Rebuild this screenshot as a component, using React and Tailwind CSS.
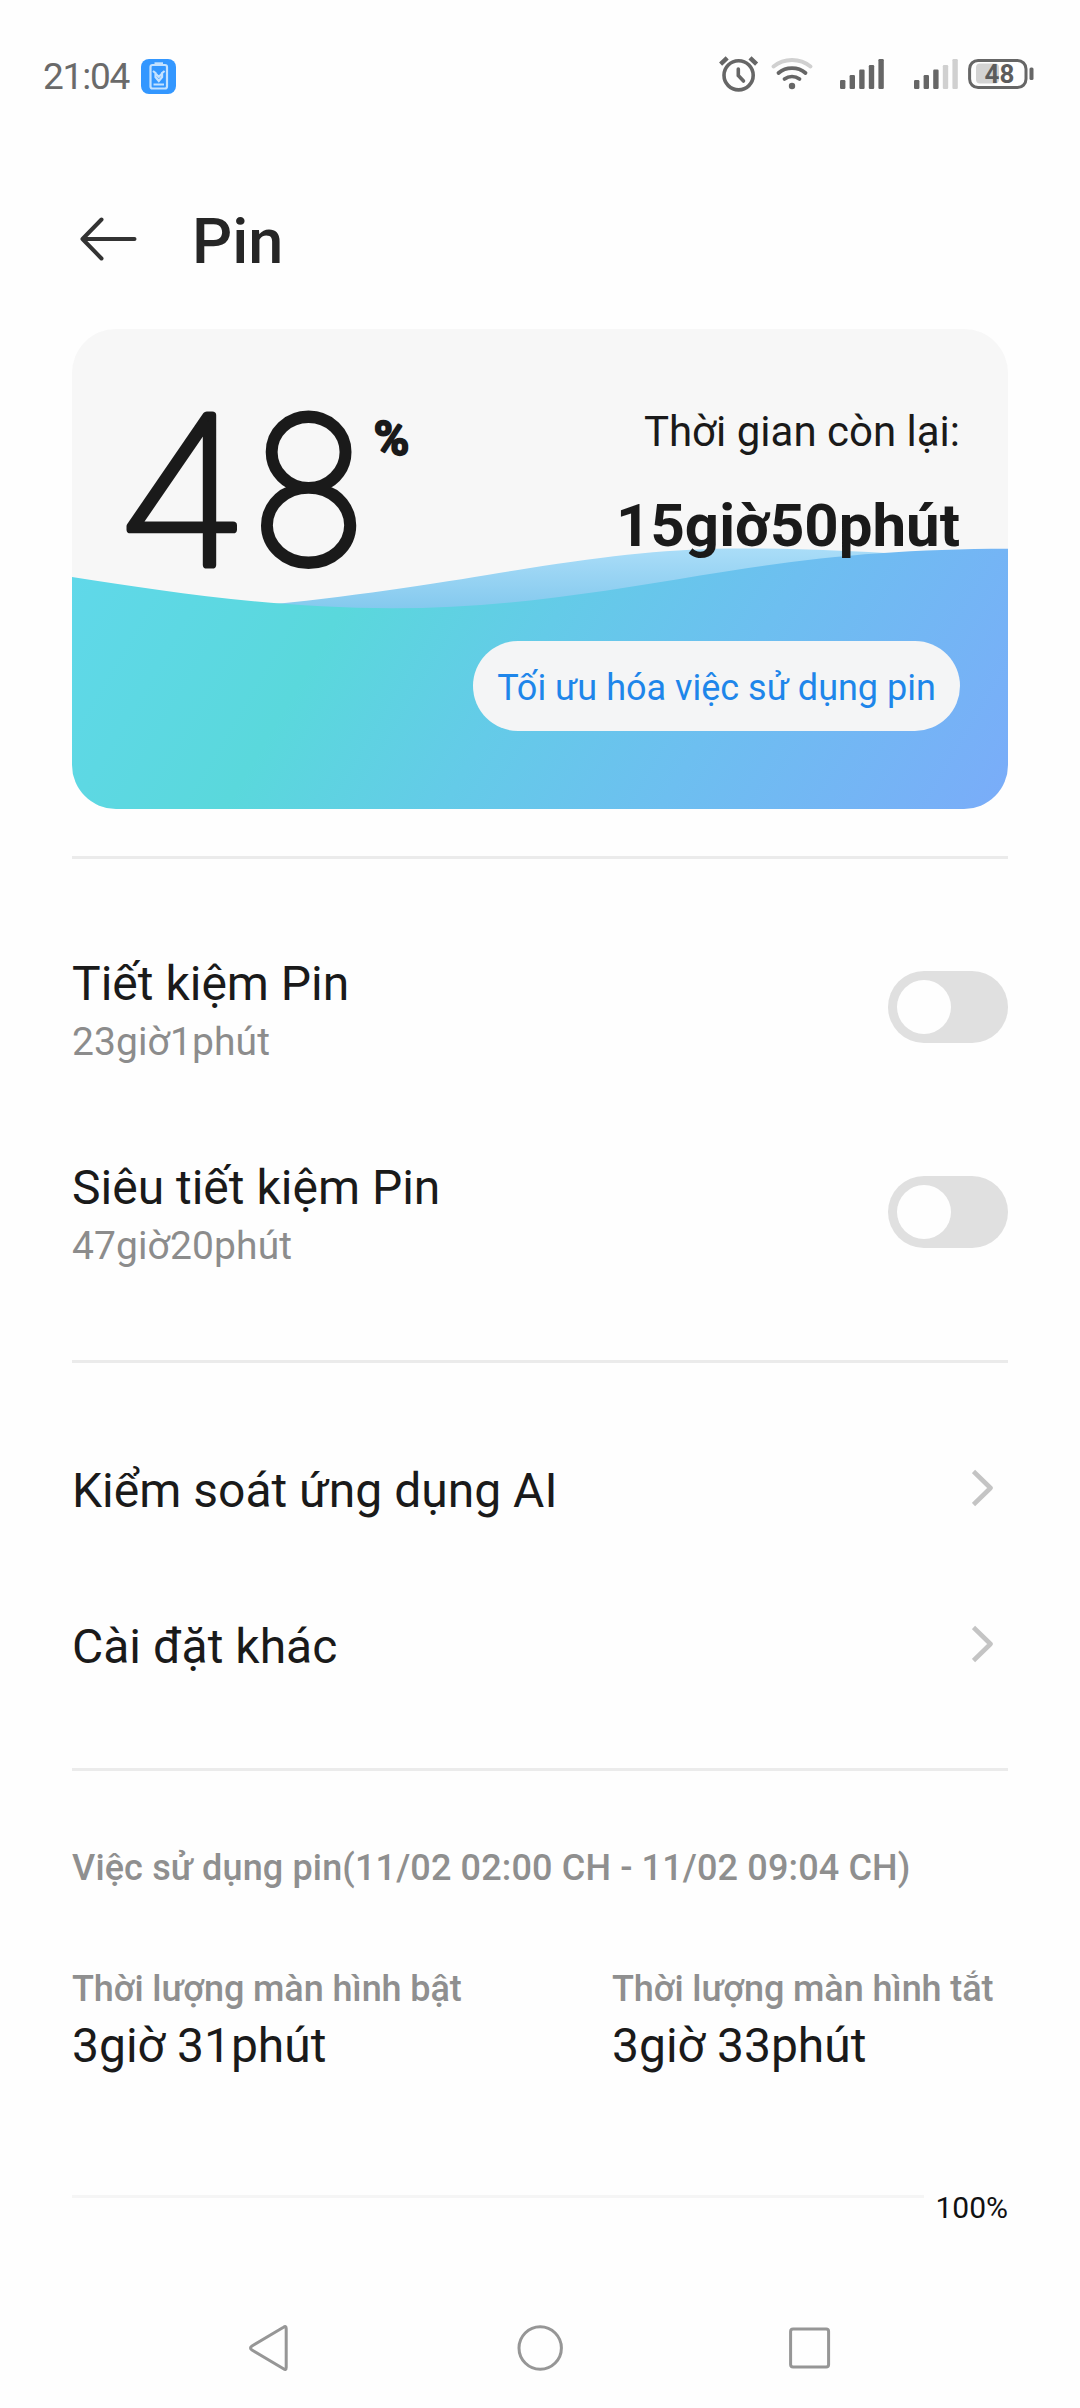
function AlarmIcon() {
  return (
    <svg width="40" height="38" viewBox="0 0 40 38" fill="none" stroke="#666" strokeWidth="3.6" strokeLinecap="round">
      <circle cx="19.6" cy="20.3" r="14.6" />
      <path d="M19.3 14v6.5l5.2 5.5" />
      <path d="M1.6 9.2 8.2 2.8M37.6 9.2 31 2.8" strokeWidth="4.4" strokeLinecap="butt" />
    </svg>
  );
}

function WifiIcon() {
  return (
    <svg width="42" height="34" viewBox="0 0 42 34" fill="none" strokeWidth="3.8" strokeLinecap="round">
      <path d="M2.5 9.5C13 .8 29 .8 39.5 9.5" stroke="#d0d0d0" />
      <path d="M7.5 16C15 9.5 27 9.5 34.5 16" stroke="#666" />
      <path d="M13.5 22C18 18.7 24 18.7 28.5 22" stroke="#666" />
      <circle cx="21" cy="29" r="3.2" fill="#666" />
    </svg>
  );
}

function SignalIcon({ level }) {
  const bars = [9, 14, 19.5, 24, 30];
  return (
    <svg width="44" height="30" viewBox="0 0 44 30">
      {bars.map((h, i) => (
        <rect key={h} x={i * 9.6} y={30 - h} width="5.4" height={h} rx="1.2" fill={i < level ? "#666" : "#d0d0d0"} />
      ))}
    </svg>
  );
}

function BatteryIcon() {
  return (
    <svg width="66" height="32" viewBox="0 0 66 32">
      <rect x="8" y="5.5" width="23" height="20" rx="4" fill="#d3d3d3" />
      <rect x="1.6" y="2.4" width="56.4" height="27.2" rx="8.5" fill="none" stroke="#666" strokeWidth="3" />
      <rect x="61.5" y="9.5" width="4" height="12.5" rx="1.5" fill="#666" />
      <text x="31.5" y="25.3" textAnchor="middle" fontSize="26" fontWeight="700" fill="#5c5c5c" className="font-[Roboto]">48</text>
    </svg>
  );
}

function SaverBadge() {
  return (
    <span className="flex size-[35px] items-center justify-center rounded-lg bg-[#3397ff]">
      <svg width="20" height="28" viewBox="0 0 20 28" fill="none" stroke="#c4e2ff" strokeWidth="2.2">
        <rect x="1.5" y="3" width="16.5" height="23.5" rx="2" />
        <path d="M5.5 1.8h8.5" strokeWidth="3" />
        <path d="M4 9l2.5 2v4l3.3 4 3.3-4v-4L15.6 9M7 12l2.8 3 2.8-3M4.500 22.500h10.500" />
      </svg>
    </span>
  );
}

function StatusBar() {
  return (
    <div className="flex h-[152px] shrink-0 items-center justify-between pr-[46px] pl-[43px]">
      <div className="flex items-center">
        <span className="mt-0.5 w-[98px] text-[37px] leading-[44px] tracking-[-1.2px] text-[#6a6a6a]">21:04</span>
        <SaverBadge />
      </div>
      <div className="-mt-1 flex items-center">
        <AlarmIcon />
        <span className="ml-3"><WifiIcon /></span>
        <span className="ml-[27px]"><SignalIcon level={5} /></span>
        <span className="ml-[30px]"><SignalIcon level={3} /></span>
        <span className="ml-[10px]"><BatteryIcon /></span>
      </div>
    </div>
  );
}

function Header() {
  return (
    <header className="flex h-[177px] shrink-0 items-center pl-[79px]">
      <svg width="60" height="46" viewBox="0 0 60 46" className="-mt-1" fill="none" stroke="#333" strokeWidth="4" strokeLinecap="round" strokeLinejoin="round">
        <path d="M22.5 3.5 3.5 23l19 19.5M3.5 23H55.5" />
      </svg>
      <h1 className="mt-0.5 ml-[53px] text-[63px] leading-[74px] font-medium text-[#262626]">Pin</h1>
    </header>
  );
}

function Waves() {
  return (
    <svg className="absolute inset-0 rounded-[44px]" width="936" height="480" viewBox="0 0 936 480">
      <defs>
        <linearGradient id="front" gradientUnits="userSpaceOnUse" x1="0" y1="220" x2="807" y2="698">
          <stop offset="0" stopColor="#60d8ea" />
          <stop offset=".28" stopColor="#5ad8dc" />
          <stop offset=".48" stopColor="#64cbe8" />
          <stop offset=".68" stopColor="#6dbff0" />
          <stop offset="1" stopColor="#7aacf9" />
        </linearGradient>
        <linearGradient id="back" x1="0" y1="0" x2="0" y2="1">
          <stop offset="0" stopColor="#aaddf8" />
          <stop offset="1" stopColor="#84c9ee" />
        </linearGradient>
      </defs>
      <path fill="url(#back)" d="M180 277 201 275.3C300 265.5 400 248.5 455 239.5C540 226 600 219.5 670 219.5C730 219.5 780 222 830 225V280H180Z" />
      <path fill="url(#front)" d="M0 248C90 262 200 279.3 320 279.3C430 279.3 530 263 628 246.5C730 229.5 820 219.7 936 219.7V480H0Z" />
    </svg>
  );
}

function Percentage() {
  return (
    <svg width="300" height="180" viewBox="0 0 300 180" className="mt-[72px] ml-[42px] overflow-visible font-[Inter]" aria-label="48%" fill="#1a1a1a" stroke="#1a1a1a" strokeLinejoin="round">
      <g fontSize="200" fontWeight="100">
        <text transform="translate(-0.5 163.5) scale(1.146 1.032)" strokeWidth="7">4</text>
        <text transform="translate(136.8 161.5) scale(.97 1.006)" strokeWidth="7.8">8</text>
      </g>
      <text x="259.8" y="54" fontSize="48" fontWeight="500" strokeWidth="2.4" className="font-[Roboto]">%</text>
    </svg>
  );
}

function BatteryCard() {
  return (
    <section className="relative mx-[72px] flex h-[480px] shrink-0 justify-between rounded-[44px] bg-[#f7f7f7]">
      <Waves />
      <div className="relative"><Percentage /></div>
      <div className="relative flex flex-col items-end pt-[73px] pr-12 text-[#1a1a1a]">
        <p className="text-[42px] leading-[60px]">Thời gian còn lại:</p>
        <p className="mt-[22px] text-[60px] leading-[84px] font-bold">15giờ50phút</p>
        <button className="mt-[73px] h-[90px] w-[487px] rounded-full bg-[#f4f5f6] pt-[3px] text-[36px] whitespace-nowrap text-[#1e86ea]">Tối ưu hóa việc sử dụng pin</button>
      </div>
    </section>
  );
}

function Divider() {
  return <div className="mx-[72px] h-[3px] shrink-0 bg-[#ebebeb]" />;
}

function ToggleRow({ title, time }) {
  return (
    <div className="flex h-[204.5px] items-center justify-between">
      <div className="pt-[7px]">
        <p className="text-[48px] leading-[62px] text-[#1a1a1a]">{title}</p>
        <p className="text-[39px] leading-[54px] tracking-[0.1px] text-[#8c8c8c]">{time}</p>
      </div>
      <div className="flex h-[72px] w-[120px] items-center rounded-full bg-[#e0e0e0] pl-[9px]">
        <span className="size-[54px] rounded-full bg-[#fefefe]" />
      </div>
    </div>
  );
}

function LinkRow({ title }) {
  return (
    <div className="flex h-[156px] items-center justify-between">
      <p className="pt-[5px] text-[48px] leading-[62px] text-[#1a1a1a]">{title}</p>
      <svg width="22" height="38" viewBox="0 0 22 38" className="mr-[14px]" fill="none" stroke="#c4c4c4" strokeWidth="4.6" strokeLinejoin="round">
        <path d="M1.5 2.5 18.5 19 1.5 35.5" />
      </svg>
    </div>
  );
}

function Duration({ label, value }) {
  return (
    <div>
      <p className="text-[36px] leading-[48px] font-medium tracking-[-0.1px] text-[#8f8f8f]">{label}</p>
      <p className="mt-0.5 text-[48px] leading-[62px] text-[#1a1a1a]">{value}</p>
    </div>
  );
}

function NavBar() {
  return (
    <nav className="mt-auto flex h-[121px] shrink-0 justify-center">
      <div className="grid w-[810px] grid-cols-3 place-items-center">
        <svg width="46" height="48" viewBox="0 0 46 48" fill="none" stroke="#969696" strokeWidth="3" strokeLinejoin="round">
          <path d="M36.5 3.2Q39.2 1.5 39.2 4.5V43.5Q39.2 46.5 36.5 44.8L5 26Q2 24 5 22Z" />
        </svg>
        <svg width="46" height="46" viewBox="0 0 46 46" fill="none" stroke="#969696" strokeWidth="3">
          <circle cx="23.2" cy="23" r="21.2" />
        </svg>
        <svg width="42" height="42" viewBox="0 0 42 42" fill="none" stroke="#969696" strokeWidth="3">
          <rect x="1.600" y="2" width="38" height="38" rx="2.500" />
        </svg>
      </div>
    </nav>
  );
}

export default function App() {
  return (
    <div className="flex h-[2408px] w-[1080px] flex-col bg-[#fefefe] font-[Roboto,sans-serif]">
      <StatusBar />
      <Header />
      <BatteryCard />
      <div className="h-[47px] shrink-0" />
      <Divider />
      <section className="mx-[72px] h-[501px] shrink-0 pt-[46px]">
        <ToggleRow title="Tiết kiệm Pin" time="23giờ1phút" />
        <ToggleRow title="Siêu tiết kiệm Pin" time="47giờ20phút" />
      </section>
      <Divider />
      <section className="mx-[72px] h-[405px] shrink-0 pt-[47px]">
        <LinkRow title="Kiểm soát ứng dụng AI" />
        <LinkRow title="Cài đặt khác" />
      </section>
      <Divider />
      <section className="mx-[72px] shrink-0 pt-[73px]">
        <h2 className="text-[36px] leading-[48px] font-medium tracking-[0.14px] text-[#8f8f8f]">Việc sử dụng pin(11/02 02:00 CH - 11/02 09:04 CH)</h2>
        <div className="mt-[73px] grid grid-cols-[540px_396px]">
          <Duration label="Thời lượng màn hình bật" value="3giờ 31phút" />
          <Duration label="Thời lượng màn hình tắt" value="3giờ 33phút" />
        </div>
        <div className="mt-[118px] flex items-start justify-between">
          <div className="h-[3px] w-[852px] bg-[#f5f5f5]" />
          <span className="text-[30px] leading-[26px] text-[#111]">100%</span>
        </div>
      </section>
      <NavBar />
    </div>
  );
}
